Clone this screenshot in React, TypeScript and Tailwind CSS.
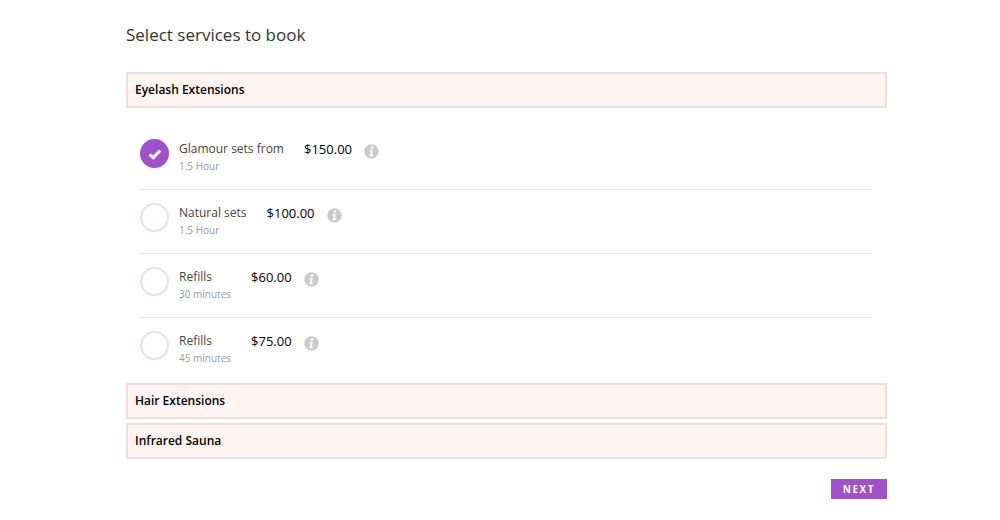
type Service = {
  id: string;
  name: string;
  duration: string;
  price: string;
  selected?: boolean;
};

const services: Service[] = [
  { id: "glamour", name: "Glamour sets from", duration: "1.5 Hour", price: "$150.00", selected: true },
  { id: "natural", name: "Natural sets", duration: "1.5 Hour", price: "$100.00" },
  { id: "refill-30", name: "Refills", duration: "30 minutes", price: "$60.00" },
  { id: "refill-45", name: "Refills", duration: "45 minutes", price: "$75.00" },
];

function CategoryHeader({ title, open = false }: { title: string; open?: boolean }) {
  return (
    <h2>
      <button
        type="button"
        aria-expanded={open}
        className="flex h-9 w-full items-center border-2 border-[#f0dedc] bg-[#fef4f1] px-[7px] text-left text-[12px] leading-4 font-semibold text-black"
      >
        {title}
      </button>
    </h2>
  );
}

function InfoIcon() {
  return (
    <svg viewBox="0 0 15 15" className="size-[15px]" aria-hidden="true">
      <circle cx="7.5" cy="7.5" r="7.2" fill="#c9c9c9" />
      <path d="M7 2.5h2.4L9 4.8H6.6zM5.7 5.9h3.1l-.8 4.6h1.1l-.3 1.7H5.3l.3-1.7h.6l.5-3H5.4z" fill="#fff" />
    </svg>
  );
}

function ServiceRow({ service }: { service: Service }) {
  return (
    <li className="flex h-16 items-start border-b border-[#eee6e5] pt-[13px] last:border-b-0">
      <label htmlFor={service.id} className="flex items-start">
        <span className="grid shrink-0">
          <input
            id={service.id}
            type="checkbox"
            defaultChecked={service.selected}
            className="peer col-start-1 row-start-1 size-[29px] appearance-none rounded-full border-2 border-[#f0dedc] bg-white checked:border-[#a050c8] checked:bg-[#a050c8]"
          />
          <svg
            viewBox="0 0 14 12"
            className="pointer-events-none invisible col-start-1 row-start-1 h-3 w-3.5 place-self-center peer-checked:visible"
            aria-hidden="true"
          >
            <path d="M1.6 6.6 5.2 9.6 12.2 2.6" fill="none" stroke="#fff" strokeWidth="3" />
          </svg>
        </span>
        <span className="flex flex-col pt-px pl-2.5">
          <span className="text-[12px] leading-[18px] text-[#444]">{service.name}</span>
          <span className="text-[10px] leading-4 text-[#999]">{service.duration}</span>
        </span>
        <span className="pt-px pl-5 text-[13px] leading-[18px] text-black">{service.price}</span>
      </label>
      <button type="button" aria-label={`About ${service.name}, ${service.duration}`} className="mt-[5px] ml-3">
        <InfoIcon />
      </button>
    </li>
  );
}

export default function App() {
  return (
    <main className="min-h-screen bg-white pt-[22px] pr-[113px] pl-[126px] font-['Open_Sans',sans-serif]">
      <h1 className="text-[17px] leading-[26px] text-[#333]">Select services to book</h1>
      <form className="pt-6" onSubmit={(event) => event.preventDefault()}>
        <CategoryHeader title="Eyelash Extensions" open />
        <ul className="px-3.5 pt-[18px] pb-px">
          {services.map((service) => (
            <ServiceRow key={service.id} service={service} />
          ))}
        </ul>
        <div className="flex flex-col gap-1">
          <CategoryHeader title="Hair Extensions" />
          <CategoryHeader title="Infrared Sauna" />
        </div>
        <div className="flex justify-end pt-5">
          <button
            type="submit"
            className="h-5 bg-[#a050c8] px-3 text-[10px] leading-5 font-bold tracking-[1.5px] text-white"
          >
            NEXT
          </button>
        </div>
      </form>
    </main>
  );
}
